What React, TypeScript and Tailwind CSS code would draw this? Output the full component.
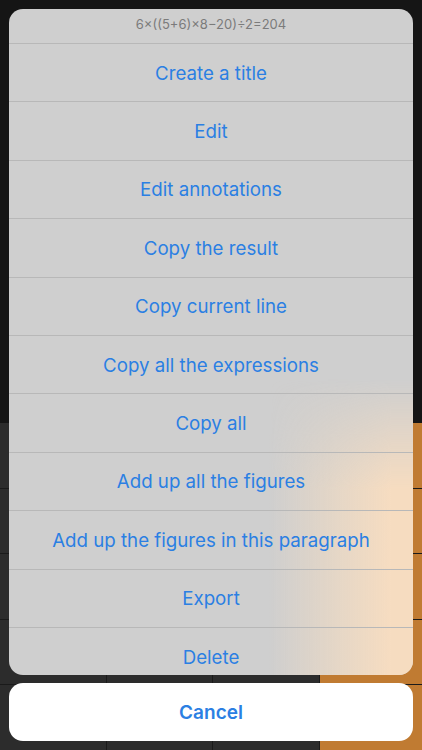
import React from "react";

const items = [
  "Create a title",
  "Edit",
  "Edit annotations",
  "Copy the result",
  "Copy current line",
  "Copy all the expressions",
  "Copy all",
  "Add up all the figures",
  "Add up the figures in this paragraph",
  "Export",
  "Delete",
];

export default function App() {
  const keys = Array.from({ length: 20 }, (_, i) => i);
  return (
    <div
      className="relative w-[422px] h-[750px] overflow-hidden bg-[#151515]"
      style={{ fontFamily: "Inter, 'Noto Sans', sans-serif" }}
    >
      <div className="flex flex-col h-full">
        <div className="h-[423px] shrink-0 bg-[#151515]" />
        <div className="grid grid-cols-[106px_105px_106px_1fr] auto-rows-[64.5px] gap-px bg-[#1a1a1a] flex-1">
          {keys.map((k) => (
            <div
              key={k}
              className={k % 4 === 3 ? "bg-[#c07b32]" : "bg-[#2c2c2c]"}
            />
          ))}
        </div>
      </div>

      {/* Action sheet overlay */}
      <div className="absolute left-[9px] right-[9px] top-[9px] h-[666px] rounded-[14px] overflow-hidden bg-[#cfcfcf]">
        <div className="absolute left-[260px] right-0 top-[370px] bottom-0 bg-[linear-gradient(to_right,rgba(245,220,192,0)_0%,rgba(245,220,192,0.55)_45%,#f6dcc0_85%)] [mask-image:linear-gradient(to_bottom,transparent_0px,black_110px)]" />
        <div className="relative flex flex-col">
          <div className="h-[34px] flex items-center justify-center text-[13px] text-[#7b7b7b] pb-[3px]">
            6×((5+6)×8−20)÷2=204
          </div>
          {items.map((t) => (
            <div
              key={t}
              className="h-[58.4px] shrink-0 border-t border-[#b8b8b8] flex items-center justify-center pt-[2px] text-[18.7px] text-[#2b7fe3]"
            >
              {t}
            </div>
          ))}
        </div>
      </div>

      <div className="absolute left-[9px] right-[9px] top-[683px] h-[58px] rounded-[14px] bg-white flex items-center justify-center pt-[2px] text-[19px] font-semibold text-[#2b7fe3]">
        Cancel
      </div>
    </div>
  );
}
